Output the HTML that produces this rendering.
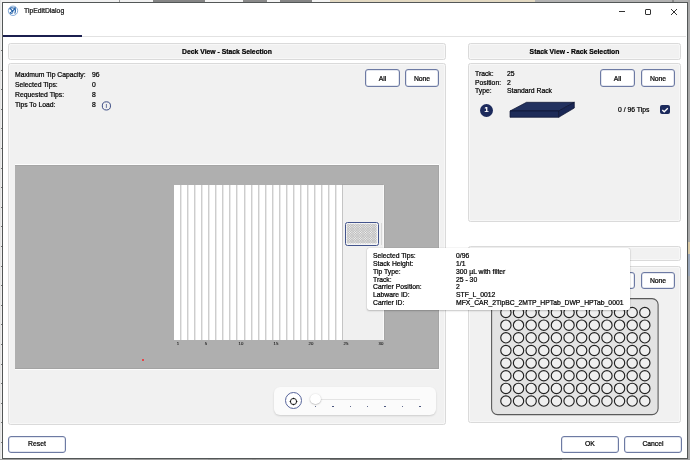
<!DOCTYPE html>
<html><head><meta charset="utf-8">
<style>
*{box-sizing:border-box;margin:0;padding:0}
html,body{width:690px;height:460px;overflow:hidden;background:#f0f0f0;font-family:"Liberation Sans",sans-serif;color:#000}
.abs{position:absolute}
.t{position:absolute;font-size:6.8px;line-height:8px;white-space:nowrap;will-change:transform;-webkit-text-stroke:0.22px currentColor}
.win{position:absolute;left:2px;top:2px;width:686px;height:457px;background:#fff;border:1px solid #535757}
.panel{position:absolute;background:#f1f1f1;border:1px solid #dadada;border-radius:2.5px;box-shadow:inset 0 0 0 1px #f7f7f7}
.hdr{font-weight:bold;text-align:center}
.btn{position:absolute;background:#fff;border:1px solid #6d7aa3;border-radius:3px;box-shadow:inset 0 0 0 0.5px #c9cfdf;font-size:6.8px;text-align:center;color:#000;padding-top:1px;will-change:transform;-webkit-text-stroke:0.22px #000}
.stripe{position:absolute;top:0;width:2px;height:155px;background:linear-gradient(90deg,#cdcdcd 0,#cdcdcd 50%,#e9e9e9 50%,#e9e9e9 100%)}
.tick{position:absolute;top:0;width:1.6px;height:1.6px;background:#34406e;border-radius:0.5px}
.tl{position:absolute;top:0;width:20px;text-align:center;font-size:4.3px;line-height:4px;color:#1a1a1a;will-change:transform;-webkit-text-stroke:0.1px #1a1a1a}
</style></head><body>
<!-- background app bits -->
<div class="abs" style="left:688px;top:0;width:2px;height:460px;background:#a9a9a9"></div>
<div class="abs" style="left:688px;top:242px;width:2px;height:12px;background:#d9c9a6"></div>
<div class="abs" style="left:688px;top:254px;width:2px;height:22px;background:#9aa6b8"></div>
<div class="abs" style="left:330px;top:0;width:205px;height:2px;background:#e3d9c2"></div>
<div class="abs" style="left:535px;top:0;width:153px;height:2px;background:#b2b2b2"></div>
<div class="abs" style="left:672px;top:0;width:2px;height:2px;background:#888"></div>
<div class="abs" style="left:150px;top:0;width:180px;height:2px;background:#f4f4f4"></div>
<div class="abs" style="left:153px;top:0;width:52px;height:2px;background:#858585"></div>
<div class="abs" style="left:243px;top:0;width:24px;height:2px;background:#8a8a8a"></div>
<div class="abs" style="left:280px;top:0;width:32px;height:2px;background:#858585"></div>
<div class="abs" style="left:119px;top:0;width:1px;height:2px;background:#999"></div>
<div class="abs" style="left:0;top:50px;width:2px;height:1px;background:#777"></div><div class="abs" style="left:0;top:70px;width:2px;height:1px;background:#777"></div><div class="abs" style="left:0;top:89px;width:2px;height:1px;background:#777"></div><div class="abs" style="left:0;top:109px;width:2px;height:1px;background:#777"></div><div class="abs" style="left:0;top:128px;width:2px;height:1px;background:#777"></div><div class="abs" style="left:0;top:148px;width:2px;height:1px;background:#777"></div><div class="abs" style="left:0;top:168px;width:2px;height:1px;background:#777"></div><div class="abs" style="left:0;top:187px;width:2px;height:1px;background:#777"></div><div class="abs" style="left:0;top:207px;width:2px;height:1px;background:#777"></div><div class="abs" style="left:0;top:226px;width:2px;height:1px;background:#777"></div><div class="abs" style="left:0;top:246px;width:2px;height:1px;background:#777"></div><div class="abs" style="left:0;top:266px;width:2px;height:1px;background:#777"></div><div class="abs" style="left:0;top:285px;width:2px;height:1px;background:#777"></div><div class="abs" style="left:0;top:305px;width:2px;height:1px;background:#777"></div><div class="abs" style="left:0;top:324px;width:2px;height:1px;background:#777"></div><div class="abs" style="left:0;top:344px;width:2px;height:1px;background:#777"></div><div class="abs" style="left:0;top:364px;width:2px;height:1px;background:#777"></div><div class="abs" style="left:0;top:383px;width:2px;height:1px;background:#777"></div><div class="abs" style="left:0;top:403px;width:2px;height:1px;background:#777"></div><div class="abs" style="left:0;top:422px;width:2px;height:1px;background:#777"></div><div class="abs" style="left:0;top:442px;width:2px;height:1px;background:#777"></div>
<div class="abs" style="left:0;top:0;width:1px;height:460px;background:#e4e4e4"></div>
<div class="abs" style="left:0;top:459px;width:690px;height:1px;background:#a0a0a0"></div>
<div class="abs" style="left:330px;top:459px;width:232px;height:1px;background:#7a7a7a"></div>
<div class="abs" style="left:135px;top:459px;width:15px;height:1px;background:#999"></div>
<div class="abs" style="left:208px;top:459px;width:10px;height:1px;background:#999"></div>
<div class="abs" style="left:252px;top:459px;width:4px;height:1px;background:#999"></div>
<div class="win"></div>
<!-- title bar -->
<svg class="abs" style="left:5px;top:3px" width="16" height="16" viewBox="0 0 16 16">
<circle cx="8" cy="7.8" r="4.7" fill="none" stroke="#7aa3d4" stroke-width="0.9"/>
<path d="M7.4 8.3 Q6.2 5.6 4.3 5.6 M5.2 5 Q7 4.3 9 5.2" fill="none" stroke="#1f5fa8" stroke-width="1.1"/>
<path d="M7.4 8.3 Q9.6 6.8 10.2 4.2 M10.2 4.8 Q10.8 7.5 9.8 10.6" fill="none" stroke="#1f5fa8" stroke-width="1.1"/>
<path d="M7.4 8.3 Q6 9.5 4.6 9.8 M5.2 10.8 Q6.8 10.5 8.2 9.6" fill="none" stroke="#1f5fa8" stroke-width="1"/>
<circle cx="7.4" cy="8.3" r="0.9" fill="#1f5fa8"/>
</svg>
<div class="t" style="left:24px;top:7px;color:#111">TipEditDialog</div>
<div class="abs" style="left:619px;top:11px;width:6px;height:1px;background:#333"></div>
<div class="abs" style="left:645px;top:8.5px;width:6px;height:6px;border:1px solid #333;border-radius:1px"></div>
<svg class="abs" style="left:670px;top:8px" width="8" height="8" viewBox="0 0 8 8"><path d="M1 1L7 7M7 1L1 7" stroke="#333" stroke-width="1"/></svg>
<div class="abs" style="left:3px;top:36px;width:683px;height:1px;background:#e2e2e2"></div>
<div class="abs" style="left:3px;top:34.5px;width:79px;height:2px;background:#1b1f4f"></div>

<!-- left panel -->
<div class="panel" style="left:8px;top:43px;width:438px;height:17px"></div>
<div class="t hdr" style="left:8px;top:48px;width:438px">Deck View - Stack Selection</div>
<div class="panel" style="left:8px;top:63px;width:438px;height:362px"></div>
<div class="t" style="left:15px;top:71px">Maximum Tip Capacity:</div>
<div class="t" style="left:92px;top:71px">96</div>
<div class="t" style="left:15px;top:81px">Selected Tips:</div>
<div class="t" style="left:92px;top:81px">0</div>
<div class="t" style="left:15px;top:91px">Requested Tips:</div>
<div class="t" style="left:92px;top:91px">8</div>
<div class="t" style="left:15px;top:101px">Tips To Load:</div>
<div class="t" style="left:92px;top:101px">8</div>
<svg class="abs" style="left:101px;top:100px" width="12" height="12" viewBox="0 0 12 12"><circle cx="5.4" cy="5.9" r="4.1" fill="none" stroke="#34447e" stroke-width="0.95"/><path d="M5.4 4.0 V7.9" stroke="#5a6796" stroke-width="0.9"/></svg>
<div class="btn" style="left:365px;top:69px;width:35px;height:18px;line-height:16px">All</div>
<div class="btn" style="left:405px;top:69px;width:34px;height:18px;line-height:16px">None</div>

<!-- deck -->
<div class="abs" style="left:15px;top:165px;width:424px;height:204px;background:#afafaf;box-shadow:inset 0 1px 0 #a5a5a5, inset -1px 0 0 #a5a5a5, inset 0 -1px 0 #a3a3a3, 0 -1px 0 #fdfdfd, 0 1px 0 #fdfdfd, 1px 0 0 #f7f7f7"></div>
<div class="abs" style="left:174px;top:185px;width:169px;height:155px;background:#fff"><div class="stripe" style="left:6.23px"></div><div class="stripe" style="left:13.26px"></div><div class="stripe" style="left:20.29px"></div><div class="stripe" style="left:27.32px"></div><div class="stripe" style="left:34.35px"></div><div class="stripe" style="left:41.38px"></div><div class="stripe" style="left:48.41px"></div><div class="stripe" style="left:55.44px"></div><div class="stripe" style="left:62.47px"></div><div class="stripe" style="left:69.50px"></div><div class="stripe" style="left:76.53px"></div><div class="stripe" style="left:83.56px"></div><div class="stripe" style="left:90.59px"></div><div class="stripe" style="left:97.62px"></div><div class="stripe" style="left:104.65px"></div><div class="stripe" style="left:111.68px"></div><div class="stripe" style="left:118.71px"></div><div class="stripe" style="left:125.74px"></div><div class="stripe" style="left:132.77px"></div><div class="stripe" style="left:139.80px"></div><div class="stripe" style="left:146.83px"></div><div class="stripe" style="left:153.86px"></div><div class="stripe" style="left:160.89px"></div></div>
<div class="abs" style="left:342px;top:185px;width:41px;height:155px;background:#f0f0f0;border-left:1px solid #c4c4c4;box-shadow:1px 0 0 #fafafa, 2px 0 0 #a6a6a6, 0 -1px 0 #a6a6a6"></div>
<div class="abs" style="left:0;top:341.5px"><div class="tl" style="left:167.80px">1</div><div class="tl" style="left:195.80px">5</div><div class="tl" style="left:230.80px">10</div><div class="tl" style="left:265.80px">15</div><div class="tl" style="left:300.80px">20</div><div class="tl" style="left:335.80px">25</div><div class="tl" style="left:370.80px">30</div></div>
<div class="abs" style="left:381px;top:223px;width:1px;height:22px;background:#d8d8d8"></div>
<div class="abs" style="left:344.8px;top:221.8px;width:34.2px;height:23.8px;border:1.3px solid #43548c;border-bottom-width:1.6px;border-radius:2.5px;background:#f4f4f4;overflow:hidden">
<svg width="31" height="21" viewBox="0 0 31 21" style="position:absolute;left:0.5px;top:0.3px"><g fill="none" stroke="#a8a8a8" stroke-width="0.6"><circle cx="2.20" cy="2.30" r="1.0"/><circle cx="4.67" cy="2.30" r="1.0"/><circle cx="7.14" cy="2.30" r="1.0"/><circle cx="9.61" cy="2.30" r="1.0"/><circle cx="12.08" cy="2.30" r="1.0"/><circle cx="14.55" cy="2.30" r="1.0"/><circle cx="17.02" cy="2.30" r="1.0"/><circle cx="19.49" cy="2.30" r="1.0"/><circle cx="21.96" cy="2.30" r="1.0"/><circle cx="24.43" cy="2.30" r="1.0"/><circle cx="26.90" cy="2.30" r="1.0"/><circle cx="29.37" cy="2.30" r="1.0"/><circle cx="2.20" cy="4.70" r="1.0"/><circle cx="4.67" cy="4.70" r="1.0"/><circle cx="7.14" cy="4.70" r="1.0"/><circle cx="9.61" cy="4.70" r="1.0"/><circle cx="12.08" cy="4.70" r="1.0"/><circle cx="14.55" cy="4.70" r="1.0"/><circle cx="17.02" cy="4.70" r="1.0"/><circle cx="19.49" cy="4.70" r="1.0"/><circle cx="21.96" cy="4.70" r="1.0"/><circle cx="24.43" cy="4.70" r="1.0"/><circle cx="26.90" cy="4.70" r="1.0"/><circle cx="29.37" cy="4.70" r="1.0"/><circle cx="2.20" cy="7.10" r="1.0"/><circle cx="4.67" cy="7.10" r="1.0"/><circle cx="7.14" cy="7.10" r="1.0"/><circle cx="9.61" cy="7.10" r="1.0"/><circle cx="12.08" cy="7.10" r="1.0"/><circle cx="14.55" cy="7.10" r="1.0"/><circle cx="17.02" cy="7.10" r="1.0"/><circle cx="19.49" cy="7.10" r="1.0"/><circle cx="21.96" cy="7.10" r="1.0"/><circle cx="24.43" cy="7.10" r="1.0"/><circle cx="26.90" cy="7.10" r="1.0"/><circle cx="29.37" cy="7.10" r="1.0"/><circle cx="2.20" cy="9.50" r="1.0"/><circle cx="4.67" cy="9.50" r="1.0"/><circle cx="7.14" cy="9.50" r="1.0"/><circle cx="9.61" cy="9.50" r="1.0"/><circle cx="12.08" cy="9.50" r="1.0"/><circle cx="14.55" cy="9.50" r="1.0"/><circle cx="17.02" cy="9.50" r="1.0"/><circle cx="19.49" cy="9.50" r="1.0"/><circle cx="21.96" cy="9.50" r="1.0"/><circle cx="24.43" cy="9.50" r="1.0"/><circle cx="26.90" cy="9.50" r="1.0"/><circle cx="29.37" cy="9.50" r="1.0"/><circle cx="2.20" cy="11.90" r="1.0"/><circle cx="4.67" cy="11.90" r="1.0"/><circle cx="7.14" cy="11.90" r="1.0"/><circle cx="9.61" cy="11.90" r="1.0"/><circle cx="12.08" cy="11.90" r="1.0"/><circle cx="14.55" cy="11.90" r="1.0"/><circle cx="17.02" cy="11.90" r="1.0"/><circle cx="19.49" cy="11.90" r="1.0"/><circle cx="21.96" cy="11.90" r="1.0"/><circle cx="24.43" cy="11.90" r="1.0"/><circle cx="26.90" cy="11.90" r="1.0"/><circle cx="29.37" cy="11.90" r="1.0"/><circle cx="2.20" cy="14.30" r="1.0"/><circle cx="4.67" cy="14.30" r="1.0"/><circle cx="7.14" cy="14.30" r="1.0"/><circle cx="9.61" cy="14.30" r="1.0"/><circle cx="12.08" cy="14.30" r="1.0"/><circle cx="14.55" cy="14.30" r="1.0"/><circle cx="17.02" cy="14.30" r="1.0"/><circle cx="19.49" cy="14.30" r="1.0"/><circle cx="21.96" cy="14.30" r="1.0"/><circle cx="24.43" cy="14.30" r="1.0"/><circle cx="26.90" cy="14.30" r="1.0"/><circle cx="29.37" cy="14.30" r="1.0"/><circle cx="2.20" cy="16.70" r="1.0"/><circle cx="4.67" cy="16.70" r="1.0"/><circle cx="7.14" cy="16.70" r="1.0"/><circle cx="9.61" cy="16.70" r="1.0"/><circle cx="12.08" cy="16.70" r="1.0"/><circle cx="14.55" cy="16.70" r="1.0"/><circle cx="17.02" cy="16.70" r="1.0"/><circle cx="19.49" cy="16.70" r="1.0"/><circle cx="21.96" cy="16.70" r="1.0"/><circle cx="24.43" cy="16.70" r="1.0"/><circle cx="26.90" cy="16.70" r="1.0"/><circle cx="29.37" cy="16.70" r="1.0"/><circle cx="2.20" cy="19.10" r="1.0"/><circle cx="4.67" cy="19.10" r="1.0"/><circle cx="7.14" cy="19.10" r="1.0"/><circle cx="9.61" cy="19.10" r="1.0"/><circle cx="12.08" cy="19.10" r="1.0"/><circle cx="14.55" cy="19.10" r="1.0"/><circle cx="17.02" cy="19.10" r="1.0"/><circle cx="19.49" cy="19.10" r="1.0"/><circle cx="21.96" cy="19.10" r="1.0"/><circle cx="24.43" cy="19.10" r="1.0"/><circle cx="26.90" cy="19.10" r="1.0"/><circle cx="29.37" cy="19.10" r="1.0"/></g></svg></div>
<div class="abs" style="left:142px;top:358.5px;width:2px;height:2px;background:#ff1a1a;border-radius:1px;box-shadow:0 0 1px #9ccfe0"></div>

<!-- slider -->
<div class="abs" style="left:274px;top:387px;width:162px;height:28px;background:#fbfbfb;border-radius:6px;box-shadow:0 1px 2px rgba(0,0,0,0.15)"></div>
<div class="abs" style="left:285px;top:392.3px;width:17.2px;height:17.2px;border:1px solid #56649a;border-radius:50%;background:#fff"></div>
<svg class="abs" style="left:288px;top:395.5px" width="11" height="11" viewBox="0 0 11 11"><circle cx="5.5" cy="5.5" r="3.1" fill="none" stroke="#111" stroke-width="0.9"/><circle cx="5.5" cy="2.4" r="0.75" fill="#111"/><circle cx="5.5" cy="8.6" r="0.75" fill="#111"/><circle cx="2.4" cy="5.5" r="0.75" fill="#111"/><circle cx="8.6" cy="5.5" r="0.75" fill="#111"/></svg>
<div class="abs" style="left:316px;top:399px;width:104px;height:1px;background:#e4e4e4"></div>
<div class="abs" style="left:0;top:405.5px"><div class="tick" style="left:314.70px"></div><div class="tick" style="left:332.10px"></div><div class="tick" style="left:349.50px"></div><div class="tick" style="left:366.90px"></div><div class="tick" style="left:384.30px"></div><div class="tick" style="left:401.70px"></div><div class="tick" style="left:419.10px"></div></div>
<div class="abs" style="left:310.3px;top:393.6px;width:10.6px;height:10.6px;border-radius:50%;background:#fff;box-shadow:0 0.5px 1.5px rgba(0,0,0,0.35)"></div>

<!-- right top panel -->
<div class="panel" style="left:468px;top:43px;width:213px;height:17px"></div>
<div class="t hdr" style="left:468px;top:48px;width:213px">Stack View - Rack Selection</div>
<div class="panel" style="left:468px;top:63px;width:213px;height:159px"></div>
<div class="t" style="left:475px;top:70px">Track:</div>
<div class="t" style="left:507px;top:70px">25</div>
<div class="t" style="left:475px;top:78.5px">Position:</div>
<div class="t" style="left:507px;top:78.5px">2</div>
<div class="t" style="left:475px;top:87px">Type:</div>
<div class="t" style="left:507px;top:87px">Standard Rack</div>
<div class="btn" style="left:600px;top:69px;width:35px;height:18px;line-height:16px">All</div>
<div class="btn" style="left:641px;top:69px;width:34px;height:18px;line-height:16px">None</div>
<div class="abs" style="left:480px;top:103.6px;width:13px;height:13px;border-radius:50%;background:#1c2a5c"></div>
<div class="t" style="left:480px;top:106px;width:13px;text-align:center;color:#fff;font-weight:bold;font-size:7px">1</div>
<svg class="abs" style="left:505px;top:98px" width="75" height="24" viewBox="505 98 75 24">
<path d="M510 111 L526.5 102.3 L574.3 102.3 L558.7 111 Z" fill="#22315f" stroke="#0c1330" stroke-width="0.7"/>
<path d="M510 111 L558.7 111 L558.7 117.3 L510 117.3 Z" fill="#1d2b58" stroke="#0c1330" stroke-width="0.7"/>
<path d="M558.7 111 L574.3 102.3 L574.3 108 L558.7 117.3 Z" fill="#1a2755" stroke="#0c1330" stroke-width="0.7"/>
</svg>
<div class="t" style="left:617.5px;top:106px">0 / 96 Tips</div>
<div class="abs" style="left:660px;top:105px;width:9.7px;height:9.3px;border-radius:2px;background:#1c2a5c"></div>
<svg class="abs" style="left:660px;top:105px" width="10" height="10" viewBox="0 0 10 10"><path d="M2.3 5 L4.2 6.8 L7.8 3.2" fill="none" stroke="#fff" stroke-width="1.3"/></svg>

<!-- right bottom panel -->
<div class="panel" style="left:468px;top:246px;width:213px;height:15px"></div>
<div class="t hdr" style="left:468px;top:249px;width:213px">Rack View - Tip Selection</div>
<div class="panel" style="left:468px;top:266px;width:213px;height:157px"></div>
<div class="btn" style="left:600px;top:272px;width:35px;height:17px;line-height:15px;padding-top:0">All</div>
<div class="btn" style="left:641px;top:272px;width:34px;height:17px;line-height:15px;padding-top:0">None</div>
<svg class="abs" style="left:490px;top:297px" width="170" height="119" viewBox="-1 -1 170 119">
<rect x="0.6" y="0.6" width="166.5" height="116" rx="6" fill="#e3e3e3" stroke="#5a5a5a" stroke-width="1.1"/>
<g fill="#efefef" stroke="#222" stroke-width="1.15"><circle cx="14.90" cy="14.50" r="5.15"/><circle cx="27.53" cy="14.50" r="5.15"/><circle cx="40.16" cy="14.50" r="5.15"/><circle cx="52.79" cy="14.50" r="5.15"/><circle cx="65.42" cy="14.50" r="5.15"/><circle cx="78.05" cy="14.50" r="5.15"/><circle cx="90.68" cy="14.50" r="5.15"/><circle cx="103.31" cy="14.50" r="5.15"/><circle cx="115.94" cy="14.50" r="5.15"/><circle cx="128.57" cy="14.50" r="5.15"/><circle cx="141.20" cy="14.50" r="5.15"/><circle cx="153.83" cy="14.50" r="5.15"/><circle cx="14.90" cy="27.15" r="5.15"/><circle cx="27.53" cy="27.15" r="5.15"/><circle cx="40.16" cy="27.15" r="5.15"/><circle cx="52.79" cy="27.15" r="5.15"/><circle cx="65.42" cy="27.15" r="5.15"/><circle cx="78.05" cy="27.15" r="5.15"/><circle cx="90.68" cy="27.15" r="5.15"/><circle cx="103.31" cy="27.15" r="5.15"/><circle cx="115.94" cy="27.15" r="5.15"/><circle cx="128.57" cy="27.15" r="5.15"/><circle cx="141.20" cy="27.15" r="5.15"/><circle cx="153.83" cy="27.15" r="5.15"/><circle cx="14.90" cy="39.80" r="5.15"/><circle cx="27.53" cy="39.80" r="5.15"/><circle cx="40.16" cy="39.80" r="5.15"/><circle cx="52.79" cy="39.80" r="5.15"/><circle cx="65.42" cy="39.80" r="5.15"/><circle cx="78.05" cy="39.80" r="5.15"/><circle cx="90.68" cy="39.80" r="5.15"/><circle cx="103.31" cy="39.80" r="5.15"/><circle cx="115.94" cy="39.80" r="5.15"/><circle cx="128.57" cy="39.80" r="5.15"/><circle cx="141.20" cy="39.80" r="5.15"/><circle cx="153.83" cy="39.80" r="5.15"/><circle cx="14.90" cy="52.45" r="5.15"/><circle cx="27.53" cy="52.45" r="5.15"/><circle cx="40.16" cy="52.45" r="5.15"/><circle cx="52.79" cy="52.45" r="5.15"/><circle cx="65.42" cy="52.45" r="5.15"/><circle cx="78.05" cy="52.45" r="5.15"/><circle cx="90.68" cy="52.45" r="5.15"/><circle cx="103.31" cy="52.45" r="5.15"/><circle cx="115.94" cy="52.45" r="5.15"/><circle cx="128.57" cy="52.45" r="5.15"/><circle cx="141.20" cy="52.45" r="5.15"/><circle cx="153.83" cy="52.45" r="5.15"/><circle cx="14.90" cy="65.10" r="5.15"/><circle cx="27.53" cy="65.10" r="5.15"/><circle cx="40.16" cy="65.10" r="5.15"/><circle cx="52.79" cy="65.10" r="5.15"/><circle cx="65.42" cy="65.10" r="5.15"/><circle cx="78.05" cy="65.10" r="5.15"/><circle cx="90.68" cy="65.10" r="5.15"/><circle cx="103.31" cy="65.10" r="5.15"/><circle cx="115.94" cy="65.10" r="5.15"/><circle cx="128.57" cy="65.10" r="5.15"/><circle cx="141.20" cy="65.10" r="5.15"/><circle cx="153.83" cy="65.10" r="5.15"/><circle cx="14.90" cy="77.75" r="5.15"/><circle cx="27.53" cy="77.75" r="5.15"/><circle cx="40.16" cy="77.75" r="5.15"/><circle cx="52.79" cy="77.75" r="5.15"/><circle cx="65.42" cy="77.75" r="5.15"/><circle cx="78.05" cy="77.75" r="5.15"/><circle cx="90.68" cy="77.75" r="5.15"/><circle cx="103.31" cy="77.75" r="5.15"/><circle cx="115.94" cy="77.75" r="5.15"/><circle cx="128.57" cy="77.75" r="5.15"/><circle cx="141.20" cy="77.75" r="5.15"/><circle cx="153.83" cy="77.75" r="5.15"/><circle cx="14.90" cy="90.40" r="5.15"/><circle cx="27.53" cy="90.40" r="5.15"/><circle cx="40.16" cy="90.40" r="5.15"/><circle cx="52.79" cy="90.40" r="5.15"/><circle cx="65.42" cy="90.40" r="5.15"/><circle cx="78.05" cy="90.40" r="5.15"/><circle cx="90.68" cy="90.40" r="5.15"/><circle cx="103.31" cy="90.40" r="5.15"/><circle cx="115.94" cy="90.40" r="5.15"/><circle cx="128.57" cy="90.40" r="5.15"/><circle cx="141.20" cy="90.40" r="5.15"/><circle cx="153.83" cy="90.40" r="5.15"/><circle cx="14.90" cy="103.05" r="5.15"/><circle cx="27.53" cy="103.05" r="5.15"/><circle cx="40.16" cy="103.05" r="5.15"/><circle cx="52.79" cy="103.05" r="5.15"/><circle cx="65.42" cy="103.05" r="5.15"/><circle cx="78.05" cy="103.05" r="5.15"/><circle cx="90.68" cy="103.05" r="5.15"/><circle cx="103.31" cy="103.05" r="5.15"/><circle cx="115.94" cy="103.05" r="5.15"/><circle cx="128.57" cy="103.05" r="5.15"/><circle cx="141.20" cy="103.05" r="5.15"/><circle cx="153.83" cy="103.05" r="5.15"/></g>
</svg>

<!-- tooltip -->
<div class="abs" style="left:367px;top:248px;width:263px;height:62px;background:#fff;border-radius:2px;box-shadow:0 0 1px rgba(0,0,0,0.35),0 1px 2px rgba(0,0,0,0.2)"></div>
<div class="t" style="left:373px;top:252px">Selected Tips:</div><div class="t" style="left:455.5px;top:252px">0/96</div>
<div class="t" style="left:373px;top:260px">Stack Height:</div><div class="t" style="left:455.5px;top:260px">1/1</div>
<div class="t" style="left:373px;top:268px">Tip Type:</div><div class="t" style="left:455.5px;top:268px">300 µL with filter</div>
<div class="t" style="left:373px;top:276px">Track:</div><div class="t" style="left:455.5px;top:276px">25 - 30</div>
<div class="t" style="left:373px;top:283px">Carrier Position:</div><div class="t" style="left:455.5px;top:283px">2</div>
<div class="t" style="left:373px;top:291px">Labware ID:</div><div class="t" style="left:455.5px;top:291px">STF_L_0012</div>
<div class="t" style="left:373px;top:299px">Carrier ID:</div><div class="t" style="left:455.5px;top:299px">MFX_CAR_2TipBC_2MTP_HPTab_DWP_HPTab_0001</div>

<!-- bottom buttons -->
<div class="btn" style="left:8px;top:436px;width:58px;height:17px;line-height:12px">Reset</div>
<div class="btn" style="left:561px;top:436px;width:58px;height:17px;line-height:12px">OK</div>
<div class="btn" style="left:624px;top:436px;width:58px;height:17px;line-height:12px">Cancel</div>
</body></html>
